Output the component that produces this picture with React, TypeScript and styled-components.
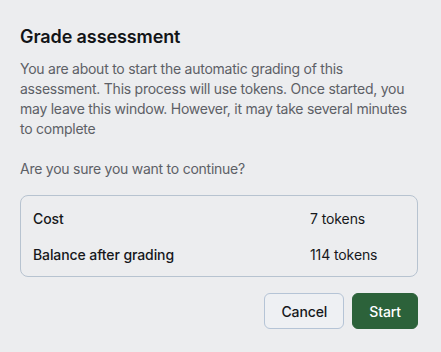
import styled, { createGlobalStyle } from 'styled-components'

const GlobalStyle = createGlobalStyle`
  html, body {
    margin: 0;
    padding: 0;
    background: #ecedef;
  }
  body {
    font-family: Inter, "Noto Sans", sans-serif;
  }
`

const Dialog = styled.div`
  box-sizing: border-box;
  width: 439px;
  height: 352px;
  padding: 23px 21px 20px 20px;
  background: #ecedef;
  display: flex;
  flex-direction: column;
`

const Title = styled.h2`
  margin: 0 0 8px 0;
  font-size: 18px;
  line-height: 28px;
  font-weight: 600;
  color: #121417;
  letter-spacing: -0.1px;
`

const Text = styled.p`
  margin: 0;
  font-size: 14px;
  line-height: 20px;
  color: #5d6066;
  letter-spacing: -0.25px;
  & + & {
    margin-top: 20px;
  }
`

const Summary = styled.div`
  margin-top: 16px;
  border: 1px solid #b7c3d0;
  border-radius: 8px;
  padding: 4px 12px;
  display: grid;
  grid-template-columns: 1fr 95px;
`

const Cell = styled.div<{ $strong?: boolean }>`
  height: 36px;
  display: flex;
  align-items: center;
  font-size: 14px;
  letter-spacing: -0.1px;
  font-weight: ${p => (p.$strong ? 500 : 400)};
  color: #16181b;
`

const Actions = styled.div`
  margin-top: 16px;
  display: flex;
  justify-content: flex-end;
  gap: 8px;
`

const Button = styled.button<{ $primary?: boolean }>`
  height: 36px;
  padding: 0 16px;
  border-radius: 6px;
  font-family: inherit;
  font-size: 14px;
  font-weight: 500;
  letter-spacing: -0.1px;
  cursor: pointer;
  border: 1px solid ${p => (p.$primary ? '#2c623a' : '#b5c4d6')};
  background: ${p => (p.$primary ? '#2c623a' : '#eef0f3')};
  color: ${p => (p.$primary ? '#ffffff' : '#16181b')};
`

const rows = [
  { label: 'Cost', value: '7 tokens' },
  { label: 'Balance after grading', value: '114 tokens' },
]

export default function App() {
  return (
    <>
      <GlobalStyle />
      <Dialog>
        <Title>Grade assessment</Title>
        <Text>
          You are about to start the automatic grading of this assessment. This process will use
          tokens. Once started, you may leave this window. However, it may take several minutes to
          complete
        </Text>
        <Text>Are you sure you want to continue?</Text>
        <Summary>
          {rows.map(r => (
            <>
              <Cell key={r.label} $strong>{r.label}</Cell>
              <Cell key={r.value}>{r.value}</Cell>
            </>
          ))}
        </Summary>
        <Actions>
          <Button>Cancel</Button>
          <Button $primary>Start</Button>
        </Actions>
      </Dialog>
    </>
  )
}
